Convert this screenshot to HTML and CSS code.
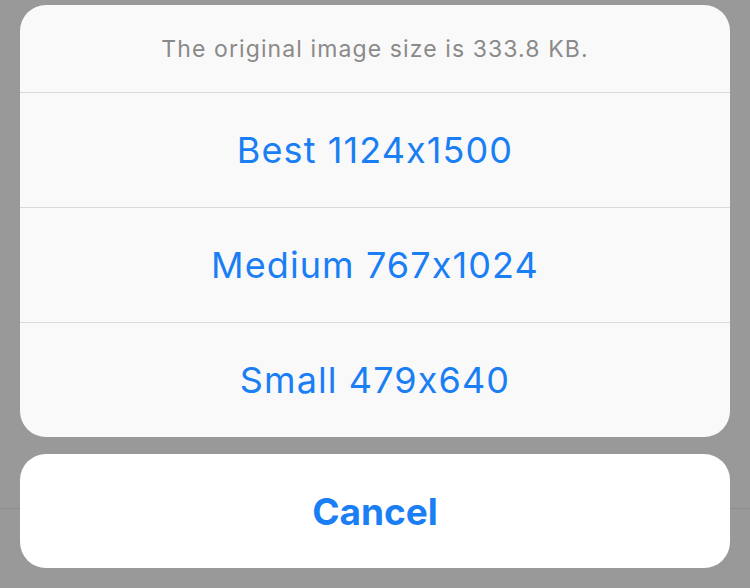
FILE: index.html
```html
<!DOCTYPE html>
<html>
  <head>
    <meta name="viewport" content="width=device-width, initial-scale=1.0, user-scalable=no">
    <link rel="stylesheet" href="styles.css">
  </head>
  <body>
    <div id="sheet">
      <div class="group">
        <div class="group__title">The original image size is 333.8 KB.</div>
        <button class="option" type="button">Best 1124x1500</button>
        <button class="option" type="button">Medium 767x1024</button>
        <button class="option" type="button">Small 479x640</button>
      </div>
      <button class="cancel" type="button">Cancel</button>
    </div>
  </body>
</html>
```

FILE: styles.css
```css
* {
  box-sizing: border-box;
}
html {
  height: 100%;
}
body {
  margin: 0;
  height: 100%;
  font-family: Inter, "Liberation Sans", sans-serif;
  font-feature-settings: "calt" 0;
  background: linear-gradient(to bottom, transparent 508px, #8c8c8c 508px, #8c8c8c 509px, transparent 509px), #999999;
}

#sheet {
  display: flex;
  flex-direction: column;
  gap: 17px;
  padding: 5px 20px 20px;
}

.group {
  display: flex;
  flex-direction: column;
  background: #f9f9f9;
  border-radius: 26px;
  overflow: hidden;
}
.group__title {
  height: 88px;
  display: flex;
  align-items: center;
  justify-content: center;
  font-size: 23px;
  letter-spacing: 1.1px;
  color: #8a8a8a;
  border-bottom: 1px solid #dadada;
}

.option,
.cancel {
  display: block;
  width: 100%;
  border: none;
  background: none;
  font-family: inherit;
  font-feature-settings: inherit;
  color: #1a7ef5;
  padding: 0;
}
.option {
  height: 115px;
  font-size: 36px;
  letter-spacing: 1.1px;
  border-bottom: 1px solid #dadada;
}
.option:last-child {
  border-bottom: none;
  height: 114px;
}
.cancel {
  height: 114px;
  background: #ffffff;
  border-radius: 26px;
  font-size: 37px;
  font-weight: 700;
}
```
